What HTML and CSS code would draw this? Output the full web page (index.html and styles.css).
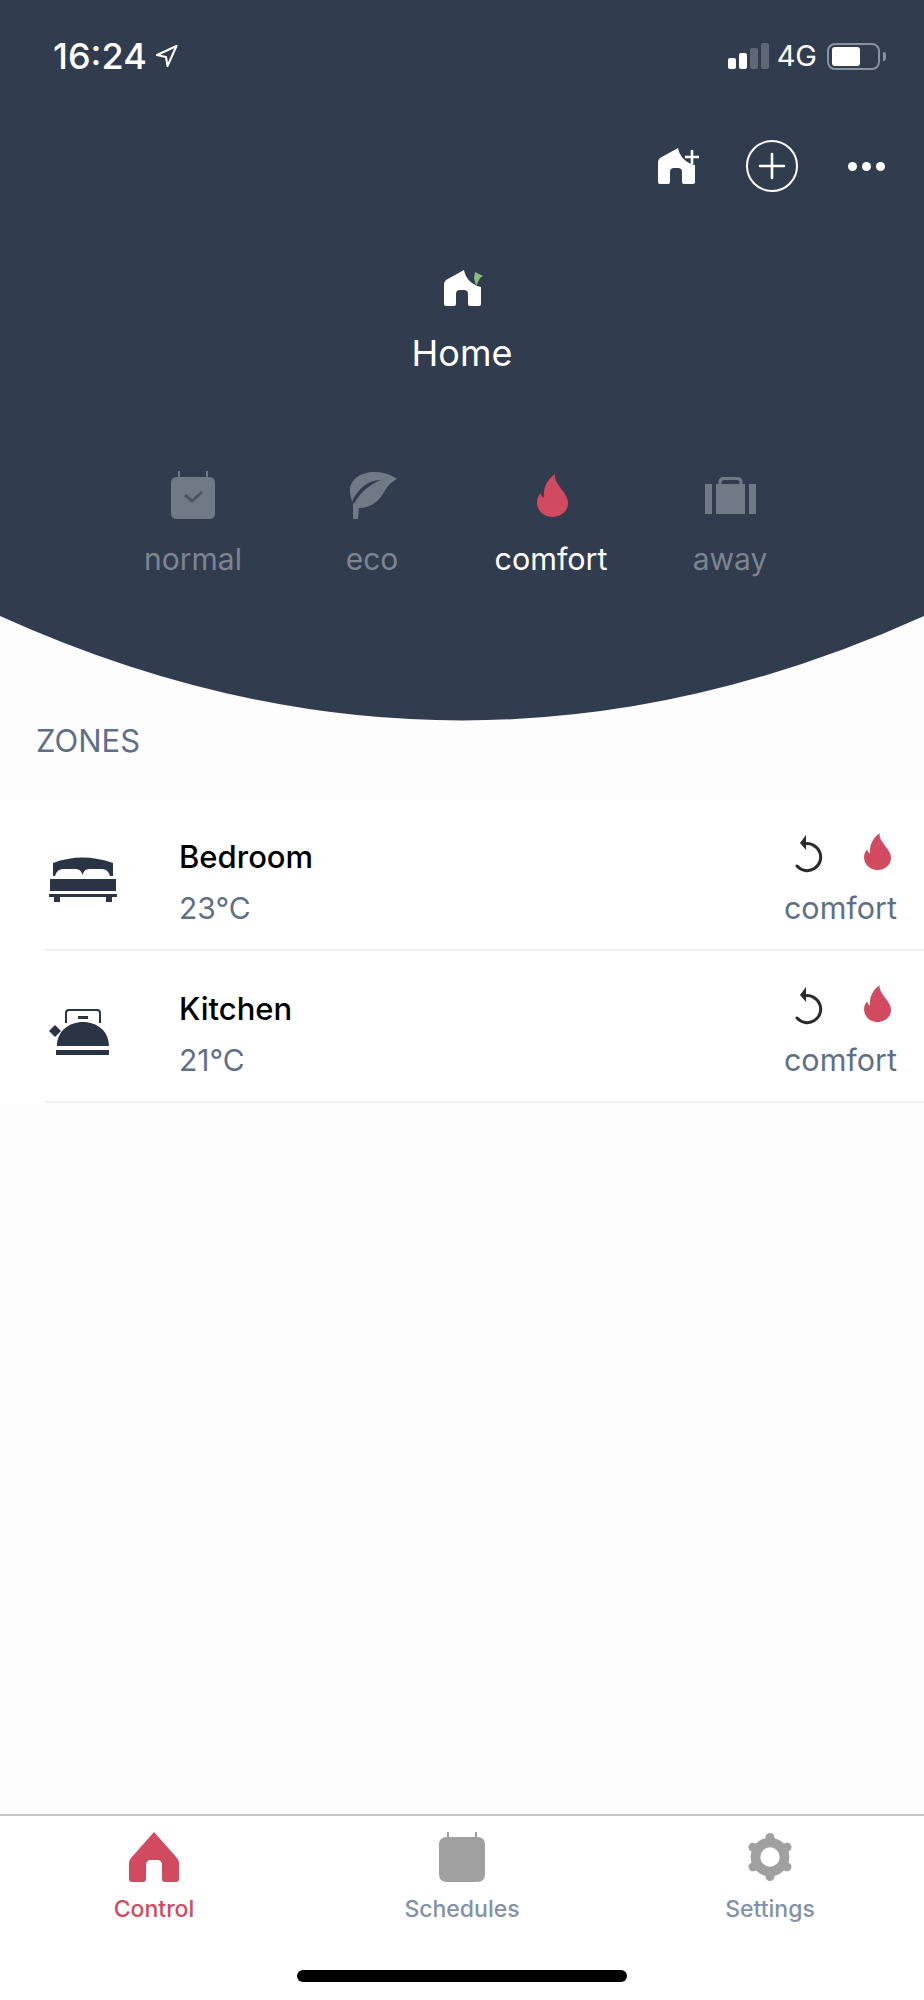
FILE: index.html
```html
<!DOCTYPE html>
<html lang="en">
<head>
    <meta charset="UTF-8">
    <meta name="viewport" content="width=device-width, initial-scale=1.0">
    <title>Control</title>
    <link rel="stylesheet" href="styles.css">
</head>
<body>
    <div class="app">
        <div class="header">
            <div class="status-bar">
                <div class="status-left">
                    <span class="time">16:24</span>
                    <svg class="location" width="23" height="22" viewBox="0 0 23 22"><path d="M21.5 1 L2 10 L11 12 L12.5 21 Z" fill="none" stroke="#fff" stroke-width="2" stroke-linejoin="round"/></svg>
                </div>
                <div class="status-right">
                    <div class="signal">
                        <div class="bar bar-1"></div>
                        <div class="bar bar-2"></div>
                        <div class="bar bar-3 off"></div>
                        <div class="bar bar-4 off"></div>
                    </div>
                    <span class="network">4G</span>
                    <div class="battery"><div class="battery-level"></div></div>
                    <div class="battery-nub"></div>
                </div>
            </div>

            <div class="actions">
                <svg class="action-home" width="42" height="36" viewBox="0 0 42 36">
                    <path d="M20 0 C21 6 26 15 37 17 V34 Q37 36 35 36 H26 Q24 36 24 34 V24 Q24 20 20 20 H16 Q12 20 12 24 V34 Q12 36 10 36 H2 Q0 36 0 34 V14 Q0 12 2 10 Z" fill="#fff"/>
                    <path d="M34 2 V16 M27 9 H41" stroke="#fff" stroke-width="2.6" fill="none"/>
                </svg>
                <svg class="action-add" width="52" height="52" viewBox="0 0 52 52">
                    <circle cx="26" cy="26" r="25" fill="none" stroke="#fff" stroke-width="2"/>
                    <path d="M26 14 V38 M14 26 H38" stroke="#fff" stroke-width="2.6" stroke-linecap="round"/>
                </svg>
                <div class="more">
                    <div class="dot"></div>
                    <div class="dot"></div>
                    <div class="dot"></div>
                </div>
            </div>

            <div class="home-title">
                <svg class="home-icon" width="39" height="36" viewBox="0 0 39 36">
                    <path d="M20 0 C21 6 26 15 37 17 V34 Q37 36 35 36 H26 Q24 36 24 34 V24 Q24 20 20 20 H16 Q12 20 12 24 V34 Q12 36 10 36 H2 Q0 36 0 34 V14 Q0 12 2 10 Z" fill="#fff"/>
                    <path d="M31 2 L39 6 L36 8 L32 16 L30 8 Z" fill="#8bbf7c"/>
                </svg>
                <div class="home-name">Home</div>
            </div>

            <div class="modes">
                <div class="mode">
                    <div class="mode-icon">
                        <svg width="44" height="48" viewBox="0 0 44 48">
                            <path d="M7 0 H9 V6 H35 V0 H37 V6 H38 Q44 6 44 12 V42 Q44 48 38 48 H6 Q0 48 0 42 V12 Q0 6 6 6 H7 Z" fill="#707a87"/>
                            <path d="M14 24 L21 30 L31 21" fill="none" stroke="#4a5464" stroke-width="3"/>
                        </svg>
                    </div>
                    <div class="mode-label">normal</div>
                </div>
                <div class="mode">
                    <div class="mode-icon">
                        <svg class="leaf" width="47" height="47" viewBox="0 0 47 47">
                            <path d="M47 7 C40 2 33 0 25 0 C10 0 0 8 0 18 C0 23 1 27 3 31 L3 47 H8 L9 36 C15 36 21 34 26 30 C35 23 34 14 47 7 Z" fill="#707a87"/>
                            <path d="M31 8 C17 8 7 18 2 30 L4 32 C9 22 18 13 31 8 Z" fill="#323c4f"/>
                        </svg>
                    </div>
                    <div class="mode-label">eco</div>
                </div>
                <div class="mode">
                    <div class="mode-icon">
                        <svg class="flame" width="31" height="43" viewBox="0 0 31 43"><path d="M18 0 C17 6 21 10 25 16 C29 21 31 25 31 29 C31 37 24 43 15.5 43 C7 43 0 37 0 28 C0 25 1.5 22 3.5 19 C4 21 5 23 7 24 C6 15 9 7 18 0 Z" fill="#d14a60"/></svg>
                    </div>
                    <div class="mode-label active">comfort</div>
                </div>
                <div class="mode">
                    <div class="mode-icon">
                        <svg width="51" height="37" viewBox="0 0 51 37">
                            <path d="M0 7 H7 V37 H0 Z M11 7 H40 V37 H11 Z M44 7 H51 V37 H44 Z" fill="#707a87"/>
                            <path d="M15 8 V5 Q15 1.5 19 1.5 H32 Q36 1.5 36 5 V8" fill="none" stroke="#707a87" stroke-width="3"/>
                        </svg>
                    </div>
                    <div class="mode-label">away</div>
                </div>
            </div>
        </div>
        <svg class="curve" width="924" height="105" viewBox="0 0 924 105"><path d="M0 0 Q462 209 924 0 Z" fill="#323c4f"/></svg>

        <div class="main">
            <div class="section-title">ZONES</div>
            <div class="zones">
                <div class="zone">
                    <div class="zone-inner">
                        <div class="zone-icon">
                            <svg width="68" height="46" viewBox="0 0 68 46">
                                <path d="M4 6 Q33 -5 64 6 V19 H61 Q59 12 53 12 H40 Q35 12 33.5 18 Q32 12 27 12 H14 Q8 12 6 19 H4 Z" fill="#2b3445"/>
                                <path d="M1 22 H67 V34 H1 Z M0 37 H68 V40 H0 Z M5 40 H11 V45 H5 Z M57 40 H63 V45 H57 Z" fill="#2b3445"/>
                            </svg>
                        </div>
                        <div class="zone-text">
                            <div class="zone-name">Bedroom</div>
                            <div class="zone-temp">23°C</div>
                        </div>
                        <div class="zone-status">
                            <div class="status-icons">
                                <svg width="30" height="38" viewBox="0 0 30 38">
                                    <path d="M9 9 A13.5 13.5 0 1 1 2 31" fill="none" stroke="#2a2a2a" stroke-width="3" stroke-linecap="round"/>
                                    <path d="M11 0 L5 8 L11 15 Z" fill="#2a2a2a"/>
                                </svg>
                                <svg class="zone-flame" width="27" height="37" viewBox="0 0 31 43" preserveAspectRatio="none"><path d="M18 0 C17 6 21 10 25 16 C29 21 31 25 31 29 C31 37 24 43 15.5 43 C7 43 0 37 0 28 C0 25 1.5 22 3.5 19 C4 21 5 23 7 24 C6 15 9 7 18 0 Z" fill="#d14a60"/></svg>
                            </div>
                            <div class="zone-mode">comfort</div>
                        </div>
                    </div>
                </div>
                <div class="zone">
                    <div class="zone-inner">
                        <div class="zone-icon">
                            <svg width="61" height="46" viewBox="0 0 61 46">
                                <path d="M17 14 V4 Q17 1 20 1 H48 Q51 1 51 4 V14" fill="none" stroke="#2b3445" stroke-width="2"/>
                                <path d="M29 7 H39 V10 H29 Z" fill="#2b3445"/>
                                <path d="M8 37 C8 22 20 13 34 13 C48 13 60 22 60 37 Z M7 41 H60 V46 H7 Z" fill="#2b3445"/>
                                <path d="M6 16 L12 22 L6 28 L0 22 Z" fill="#2b3445"/>
                            </svg>
                        </div>
                        <div class="zone-text">
                            <div class="zone-name">Kitchen</div>
                            <div class="zone-temp">21°C</div>
                        </div>
                        <div class="zone-status">
                            <div class="status-icons">
                                <svg width="30" height="38" viewBox="0 0 30 38">
                                    <path d="M9 9 A13.5 13.5 0 1 1 2 31" fill="none" stroke="#2a2a2a" stroke-width="3" stroke-linecap="round"/>
                                    <path d="M11 0 L5 8 L11 15 Z" fill="#2a2a2a"/>
                                </svg>
                                <svg class="zone-flame" width="27" height="37" viewBox="0 0 31 43" preserveAspectRatio="none"><path d="M18 0 C17 6 21 10 25 16 C29 21 31 25 31 29 C31 37 24 43 15.5 43 C7 43 0 37 0 28 C0 25 1.5 22 3.5 19 C4 21 5 23 7 24 C6 15 9 7 18 0 Z" fill="#d14a60"/></svg>
                            </div>
                            <div class="zone-mode">comfort</div>
                        </div>
                    </div>
                </div>
            </div>
        </div>

        <div class="tabbar">
            <div class="tabs">
                <div class="tab">
                    <svg width="50" height="50" viewBox="0 0 50 50"><path d="M25 0 L48 26 Q50 28 50 31 V47 Q50 50 47 50 H36 Q33 50 33 47 V33 Q33 28 28 28 H22 Q17 28 17 33 V47 Q17 50 14 50 H3 Q0 50 0 47 V31 Q0 28 2 26 Z" fill="#d14a60"/></svg>
                    <div class="tab-label active">Control</div>
                </div>
                <div class="tab">
                    <svg width="46" height="50" viewBox="0 0 46 50"><path d="M8 0 H10 V5 H36 V0 H38 V5 Q46 5 46 13 V42 Q46 50 38 50 H8 Q0 50 0 42 V13 Q0 5 8 5 Z" fill="#a0a0a0"/></svg>
                    <div class="tab-label">Schedules</div>
                </div>
                <div class="tab">
                    <svg width="46" height="50" viewBox="0 0 46 50">
                        <circle cx="23" cy="25" r="14.5" fill="none" stroke="#a0a0a0" stroke-width="9.6"/>
                        <g stroke="#a0a0a0" stroke-width="9" stroke-linecap="round">
                            <path d="M23 5.5 V8"/>
                            <path d="M23 42 V44.5"/>
                            <path d="M6 15.2 L8.3 16.5"/>
                            <path d="M37.7 33.5 L40 34.8"/>
                            <path d="M6 34.8 L8.3 33.5"/>
                            <path d="M37.7 16.5 L40 15.2"/>
                        </g>
                    </svg>
                    <div class="tab-label">Settings</div>
                </div>
            </div>
            <div class="home-indicator"></div>
        </div>
    </div>
</body>
</html>
```

FILE: styles.css
```css
body {
    margin: 0;
    font-family: Inter, "Liberation Sans", sans-serif;
    background: #fdfdfd;
}
svg {
    display: block;
}
.app {
    width: 924px;
    height: 2000px;
    display: flex;
    flex-direction: column;
    overflow: hidden;
}

/* top dark area */
.header {
    height: 616px;
    background: #323c4f;
    color: white;
}
.status-bar {
    height: 112px;
    display: flex;
    justify-content: space-between;
    align-items: center;
    padding: 0 38px 0 53px;
}
.status-left {
    display: flex;
    align-items: center;
    gap: 8px;
}
.time {
    font-size: 36px;
    font-weight: 500;
    line-height: 40px;
}
.status-right {
    display: flex;
    align-items: center;
}
.signal {
    display: flex;
    align-items: flex-end;
    gap: 3.5px;
    height: 26px;
}
.bar {
    width: 7.5px;
    background: white;
    border-radius: 2px;
}
.bar.off {
    background: #5f6876;
}
.bar-1 { height: 11px; }
.bar-2 { height: 16px; }
.bar-3 { height: 21px; }
.bar-4 { height: 26px; }
.network {
    font-size: 29px;
    line-height: 30px;
    margin: 0 10px 0 8px;
}
.battery {
    width: 43px;
    height: 19px;
    border: 2px solid #8a92a0;
    border-radius: 8px;
    padding: 2px 3px;
}
.battery-level {
    width: 28px;
    height: 19px;
    background: white;
    border-radius: 3px;
}
.battery-nub {
    width: 3px;
    height: 9px;
    margin-left: 3px;
    background: #8a92a0;
    border-radius: 0 3px 3px 0;
}
.actions {
    height: 108px;
    display: flex;
    justify-content: flex-end;
    align-items: center;
    padding-right: 39px;
}
.action-add {
    margin: 0 50px 0 46px;
}
.more {
    display: flex;
    gap: 5px;
}
.dot {
    width: 9px;
    height: 9px;
    background: white;
    border-radius: 50%;
}
.home-title {
    display: flex;
    flex-direction: column;
    align-items: center;
    padding-top: 50px;
}
.home-icon {
    margin-left: 2px;
}
.home-name {
    font-size: 36px;
    line-height: 41px;
    margin-top: 27px;
}
.modes {
    display: grid;
    grid-template-columns: repeat(4, 179px);
    justify-content: center;
    margin-top: 97px;
    padding-right: 1px;
}
.mode {
    display: flex;
    flex-direction: column;
    align-items: center;
}
.mode-icon {
    height: 48px;
    display: flex;
    align-items: center;
}
.leaf {
    margin-left: 2px;
}
.flame {
    margin-left: 2px;
}
.mode-label {
    font-size: 30px;
    line-height: 36px;
    margin-top: 22px;
    color: #7c8592;
}
.mode-label.active {
    font-size: 30.5px;
    color: white;
}
.curve {
    flex-shrink: 0;
}

/* zones list */
.main {
    flex: 1;
}
.section-title {
    font-size: 31px;
    line-height: 36px;
    height: 78px;
    box-sizing: border-box;
    padding: 2px 0 0 36px;
    color: #5f6f85;
}
.zones {
    background: white;
}
.zone-inner {
    height: 152px;
    box-sizing: border-box;
    margin-left: 45px;
    padding-right: 27px;
    border-bottom: 2px solid #f0f0f0;
    display: flex;
}
.zone-icon {
    width: 134px;
    padding: 58px 0 0 4px;
    box-sizing: border-box;
}
.zone-text {
    flex: 1;
    padding-top: 38px;
}
.zone-name {
    font-size: 31px;
    font-weight: 500;
    line-height: 40px;
    color: black;
}
.zone-temp {
    font-size: 30px;
    line-height: 40px;
    margin-top: 11px;
    color: #5f6f85;
}
.zone-status {
    display: flex;
    flex-direction: column;
    align-items: center;
    padding-top: 36px;
}
.status-icons {
    display: flex;
    align-items: center;
    gap: 39px;
    height: 38px;
    margin-bottom: 15px;
    padding-left: 6px;
}
.zone-flame {
    margin-top: -5px;
}
.zone-mode {
    font-size: 30.5px;
    line-height: 40px;
    color: #5f6f85;
}

/* bottom tabs */
.tabbar {
    height: 186px;
    box-sizing: border-box;
    background: white;
    border-top: 2px solid #c8c8c8;
    padding-top: 16px;
}
.tabs {
    display: grid;
    grid-template-columns: repeat(3, 308px);
}
.tab {
    display: flex;
    flex-direction: column;
    align-items: center;
}
.tab-label {
    font-size: 23px;
    font-weight: 500;
    line-height: 28px;
    margin-top: 13px;
    color: #8490a8;
}
.tab-label.active {
    color: #d14a60;
}
.home-indicator {
    width: 330px;
    height: 12px;
    margin: 47px auto 0;
    background: black;
    border-radius: 6px;
}
```
